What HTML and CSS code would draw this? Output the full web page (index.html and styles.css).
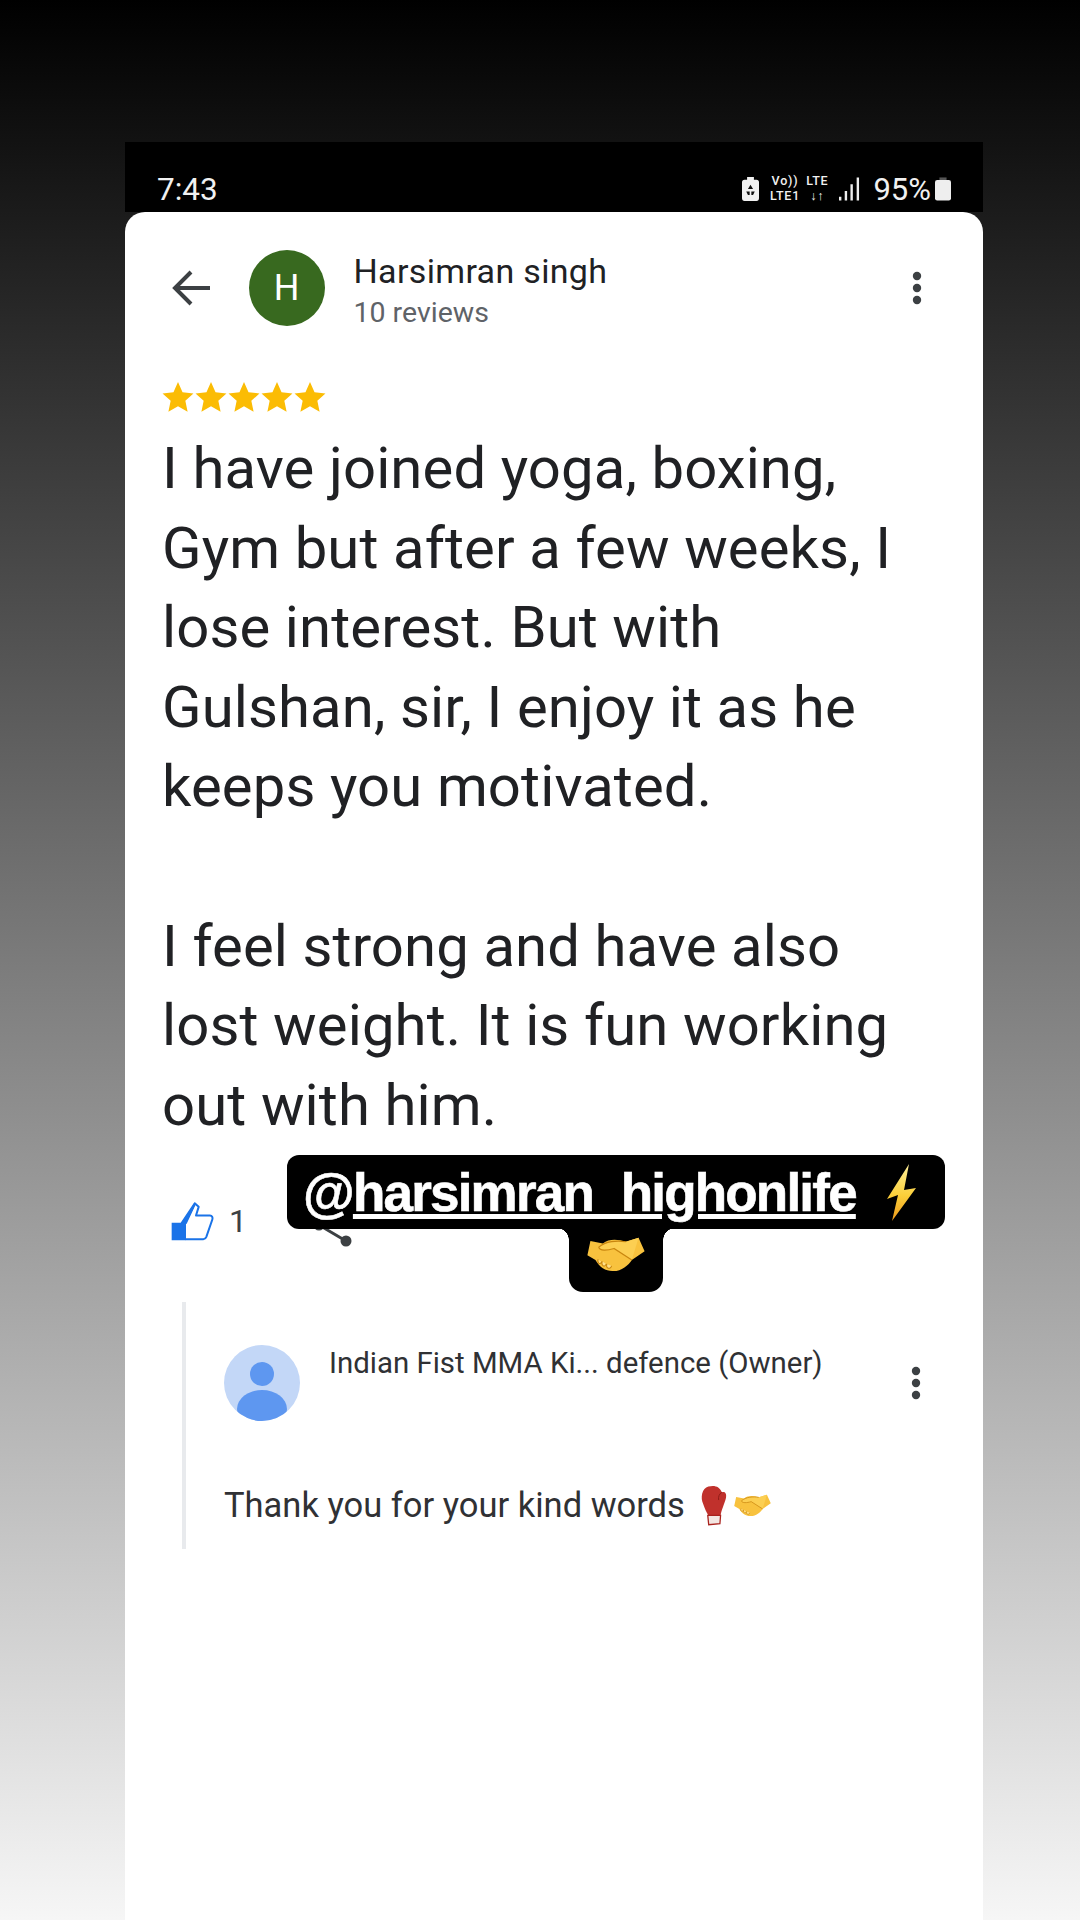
FILE: index.html
```html
<!DOCTYPE html>
<html lang="en">
<head>
<meta charset="utf-8">
<title>Review</title>
<link rel="stylesheet" href="styles.css">
</head>
<body>
<svg class="defs" width="0" height="0" aria-hidden="true">
  <defs>
    <symbol id="shake" viewBox="85 38 172 104">
      <path d="M95 50L132 57C150 43 175 44 200 52L238 40L256 80L218 106C208 122 185 141 160 139C140 138 122 128 110 106L86 92Z" fill="#f8c23e"/>
      <path d="M120 68C122 80 145 78 165 72L218 106L238 40L200 52C175 46 150 48 120 68Z" fill="#fccf52"/>
      <path d="M200 52C175 48 140 50 120 68C122 80 145 78 165 72L218 106" fill="none" stroke="#c9860f" stroke-width="3.500"/>
      <path d="M118 104C114 116 124 122 128 112M130 110C126 124 138 130 142 118M144 118C140 132 154 136 158 124" fill="#ffe08a" stroke="#c9860f" stroke-width="3"/>
    </symbol>
    <symbol id="kebab" viewBox="0 0 10 34">
      <circle cx="5" cy="5" r="4.200"/><circle cx="5" cy="17" r="4.200"/><circle cx="5" cy="29" r="4.200"/>
    </symbol>
    <symbol id="star" viewBox="0 0 24 24">
      <path d="M12 .8l3.400 7.600 8.200.9-6.100 5.600 1.700 8.200L12 18.900l-7.200 4.200 1.700-8.200L.4 9.300l8.200-.9z"/>
    </symbol>
    <linearGradient id="boltfill" x1="0" y1="0" x2="0" y2="1">
      <stop offset="0" stop-color="#fff09a"/>
      <stop offset=".55" stop-color="#fbcf3a"/>
      <stop offset="1" stop-color="#ef9a1c"/>
    </linearGradient>
  </defs>
</svg>

<main class="phone">
  <header class="status">
    <span class="clock">7:43</span>
    <div class="status-right">
      <svg class="saver" viewBox="0 0 20 28"><path d="M6 0h8v3h3a3 3 0 0 1 3 3v19a3 3 0 0 1-3 3H3a3 3 0 0 1-3-3V6a3 3 0 0 1 3-3h3z" fill="#f1f1f1"/><path d="M10 9l3 5h-6zM5 17h4v4H7zM11 17h4l-2 4h-2z" fill="#111"/></svg>
      <div class="net net-a"><span>Vo))</span><span>LTE1</span></div>
      <div class="net net-b"><span>LTE</span><span class="arrows">↓↑</span></div>
      <svg class="signal" viewBox="0 0 22 24"><path d="M0 20h2.500v4H0zM6 14h2.500v10H6zM12 7h2.500v17H12zM18.500 0H21v24h-2.500z" fill="#eee"/></svg>
      <span class="pct">95%</span>
      <svg class="batt" viewBox="0 0 18 26"><path d="M5 0h8v3H5z" fill="#555"/><rect y="3" width="18" height="23" rx="2.500" fill="#eee"/></svg>
    </div>
  </header>

  <section class="card">
    <div class="head">
      <svg class="back" viewBox="0 0 40 36"><path d="M38 18H4M19 2L3 18l16 16" fill="none" stroke="#3c4043" stroke-width="4"/></svg>
      <div class="avatar-h">H</div>
      <div class="who">
        <div class="name">Harsimran singh</div>
        <div class="count">10 reviews</div>
      </div>
      <svg class="kebab"><use href="#kebab"/></svg>
    </div>

    <div class="stars">
      <svg class="star"><use href="#star"/></svg>
      <svg class="star"><use href="#star"/></svg>
      <svg class="star"><use href="#star"/></svg>
      <svg class="star"><use href="#star"/></svg>
      <svg class="star"><use href="#star"/></svg>
    </div>

    <p class="body">I have joined yoga, boxing,<br>Gym but after a few weeks, I<br>lose interest. But with<br>Gulshan, sir, I enjoy it as he<br>keeps you motivated.<br><br>I feel strong and have also<br>lost weight. It is fun working<br>out with him.</p>

    <div class="actions">
      <svg class="thumb" viewBox="33 35 129 119"><path d="M77 102L105 42L116 52L108 78H150C156 78 159 84 157 90L139 142C137 147 134 149 130 149H77" fill="#fff" stroke="#1a73e8" stroke-width="6" stroke-linejoin="round"/><path d="M35 100H62L103 38L108 42L78 102V152H35z" fill="#1a73e8"/></svg>
      <span class="likes">1</span>
      <svg class="share" viewBox="0 0 40 40"><path d="M6 16L33 32M6 16L33 3" fill="none" stroke="#3c4043" stroke-width="3"/><circle cx="33" cy="32" r="5.500" fill="#3c4043"/><circle cx="6" cy="16" r="5.500" fill="#3c4043"/><circle cx="33" cy="3" r="3" fill="#3c4043"/></svg>
    </div>

    <div class="reply">
      <div class="reply-head">
        <svg class="avatar-o" viewBox="0 0 76 76"><defs><clipPath id="round"><circle cx="38" cy="38" r="38"/></clipPath></defs><g clip-path="url(#round)"><rect width="76" height="76" fill="#c3d7f7"/><circle cx="38" cy="29" r="12" fill="#5e97f0"/><ellipse cx="38" cy="64" rx="25" ry="19" fill="#5e97f0"/></g></svg>
        <div class="owner">Indian Fist MMA Ki... defence (Owner)</div>
        <svg class="kebab"><use href="#kebab"/></svg>
      </div>
      <div class="reply-text">Thank you for your kind words
        <svg class="glove" viewBox="25 25 85 128"><path d="M50 30C30 35 24 65 34 85C39 100 44 110 50 120H88C90 105 100 85 105 65C108 50 100 45 92 48C85 30 70 25 50 30Z" fill="#c0312c"/><path d="M92 48C84 52 80 62 82 72" fill="none" stroke="#8e1b16" stroke-width="3"/><path d="M48 120H88L86 146L51 149Z" fill="#f3e6e2" stroke="#a9221d" stroke-width="4"/></svg>
        <svg class="shake-s"><use href="#shake"/></svg>
      </div>
    </div>
  </section>
</main>

<aside class="sticker">
  <div class="sticker-top">
    <span class="handle">@<u>harsimran_highonlife</u></span>
    <svg class="bolt" viewBox="0 0 29 57"><path d="M22 0L0 35L11 31L5 57L29 24L17 26Z" fill="url(#boltfill)"/></svg>
  </div>
  <div class="sticker-bottom"><svg class="shake-l"><use href="#shake"/></svg></div>
</aside>
</body>
</html>
```

FILE: styles.css
```css
* { box-sizing: border-box; }
html, body { margin: 0; height: 1920px; overflow: hidden; }
body {
  position: relative;
  padding: 142px 97px 0 125px;
  background: linear-gradient(180deg, #000 0, #f6f6f6 1920px);
  font-family: Roboto, "Noto Sans", sans-serif;
  color: #202124;
}
.defs { position: absolute; }
.phone { display: flex; flex-direction: column; height: 1778px; }
.status {
  height: 70px; flex: none; background: #000; color: #f1f1f1;
  display: flex; align-items: center; justify-content: space-between;
  padding: 24px 32px 0 32px;
}
.clock { font-size: 31.500px; }
.status-right { display: flex; align-items: center; }
.saver { width: 17px; height: 24px; }
.net { display: flex; flex-direction: column; align-items: center; font-size: 12.500px; line-height: 14.700px; font-weight: 500; letter-spacing: .8px; }
.net-a { margin-left: 11px; }
.net-b { margin-left: 6px; }
.arrows { font-family: "Liberation Sans", sans-serif; font-size: 12.500px; }
.signal { width: 21px; height: 24px; margin-left: 11px; }
.pct { font-size: 31px; margin-left: 13px; }
.batt { width: 16px; height: 24px; margin-left: 4px; }

.card { flex: 1; background: #fff; border-radius: 20px 20px 0 0; padding: 38px 0 0 37px; }
.head { display: flex; align-items: center; height: 76px; padding: 0 61px 0 10px; }
.back { width: 40px; height: 36px; flex: none; }
.avatar-h {
  width: 76px; height: 76px; border-radius: 50%; background: #38691f; color: #fff; flex: none;
  display: flex; align-items: center; justify-content: center; font-size: 36px; margin-left: 36.500px;
}
.who { flex: 1; margin: 8px 0 0 29px; }
.name { font-size: 34px; letter-spacing: .33px; line-height: 42px; color: #202124; }
.count { font-size: 28.500px; line-height: 42px; color: #5f6368; }
.kebab { width: 10px; height: 34px; flex: none; fill: #3c4043; }
.stars { display: flex; gap: 1px; margin-top: 55px; height: 32px; }
.star { width: 32px; height: 32px; fill: #fbbc04; }
.body { margin: 16px 0 0; font-size: 58px; letter-spacing: .12px; line-height: 79.600px; color: #202124; white-space: nowrap; }
.actions { display: flex; align-items: center; height: 64px; margin-top: 44px; padding-left: 9px; }
.thumb { width: 43px; height: 40px; }
.likes { font-size: 32px; margin-left: 15px; color: #3c4043; }
.share { width: 40px; height: 40px; margin: 16px 0 0 66px; }

.reply { margin: 49px 0 0 20px; height: 247px; border-left: 4px solid #e8eaed; padding: 43px 62px 0 38px; }
.reply-head { display: flex; align-items: flex-start; }
.avatar-o { width: 76px; height: 76px; flex: none; }
.owner { flex: 1; margin-left: 29px; font-size: 29.400px; line-height: 36px; color: #303134; }
.reply-head .kebab { margin-top: 21px; }
.reply-text { margin-top: 62px; font-size: 34.500px; line-height: 44px; color: #303134; display: flex; align-items: center; gap: 14px; white-space: nowrap; }
.glove { width: 30px; height: 41px; flex: none; }
.shake-s { width: 37px; height: 23px; margin-left: -9px; flex: none; }

.sticker { position: absolute; left: 287px; top: 1155px; width: 658px; display: flex; flex-direction: column; align-items: center; }
.sticker-top { width: 100%; height: 74px; background: #000; border-radius: 12px; display: flex; align-items: center; padding-left: 16px; color: #fff; }
.handle { font-family: "Liberation Sans", Arial, sans-serif; font-weight: 700; font-size: 53px; letter-spacing: -1.800px; -webkit-text-stroke: .6px #fff; }
.bolt { width: 29px; height: 57px; margin-left: 31px; }
.sticker-bottom { position: relative; width: 94px; height: 64px; margin-top: -1px; background: #000; border-radius: 0 0 14px 14px; display: flex; justify-content: center; padding-top: 9px; }
.sticker-bottom::before, .sticker-bottom::after { content: ""; position: absolute; top: 0; width: 12px; height: 12px; }
.sticker-bottom::before { left: -12px; background: radial-gradient(circle at 0 100%, transparent 11.500px, #000 12px); }
.sticker-bottom::after { right: -12px; background: radial-gradient(circle at 100% 100%, transparent 11.500px, #000 12px); }
.shake-l { width: 58px; height: 35px; }
```
